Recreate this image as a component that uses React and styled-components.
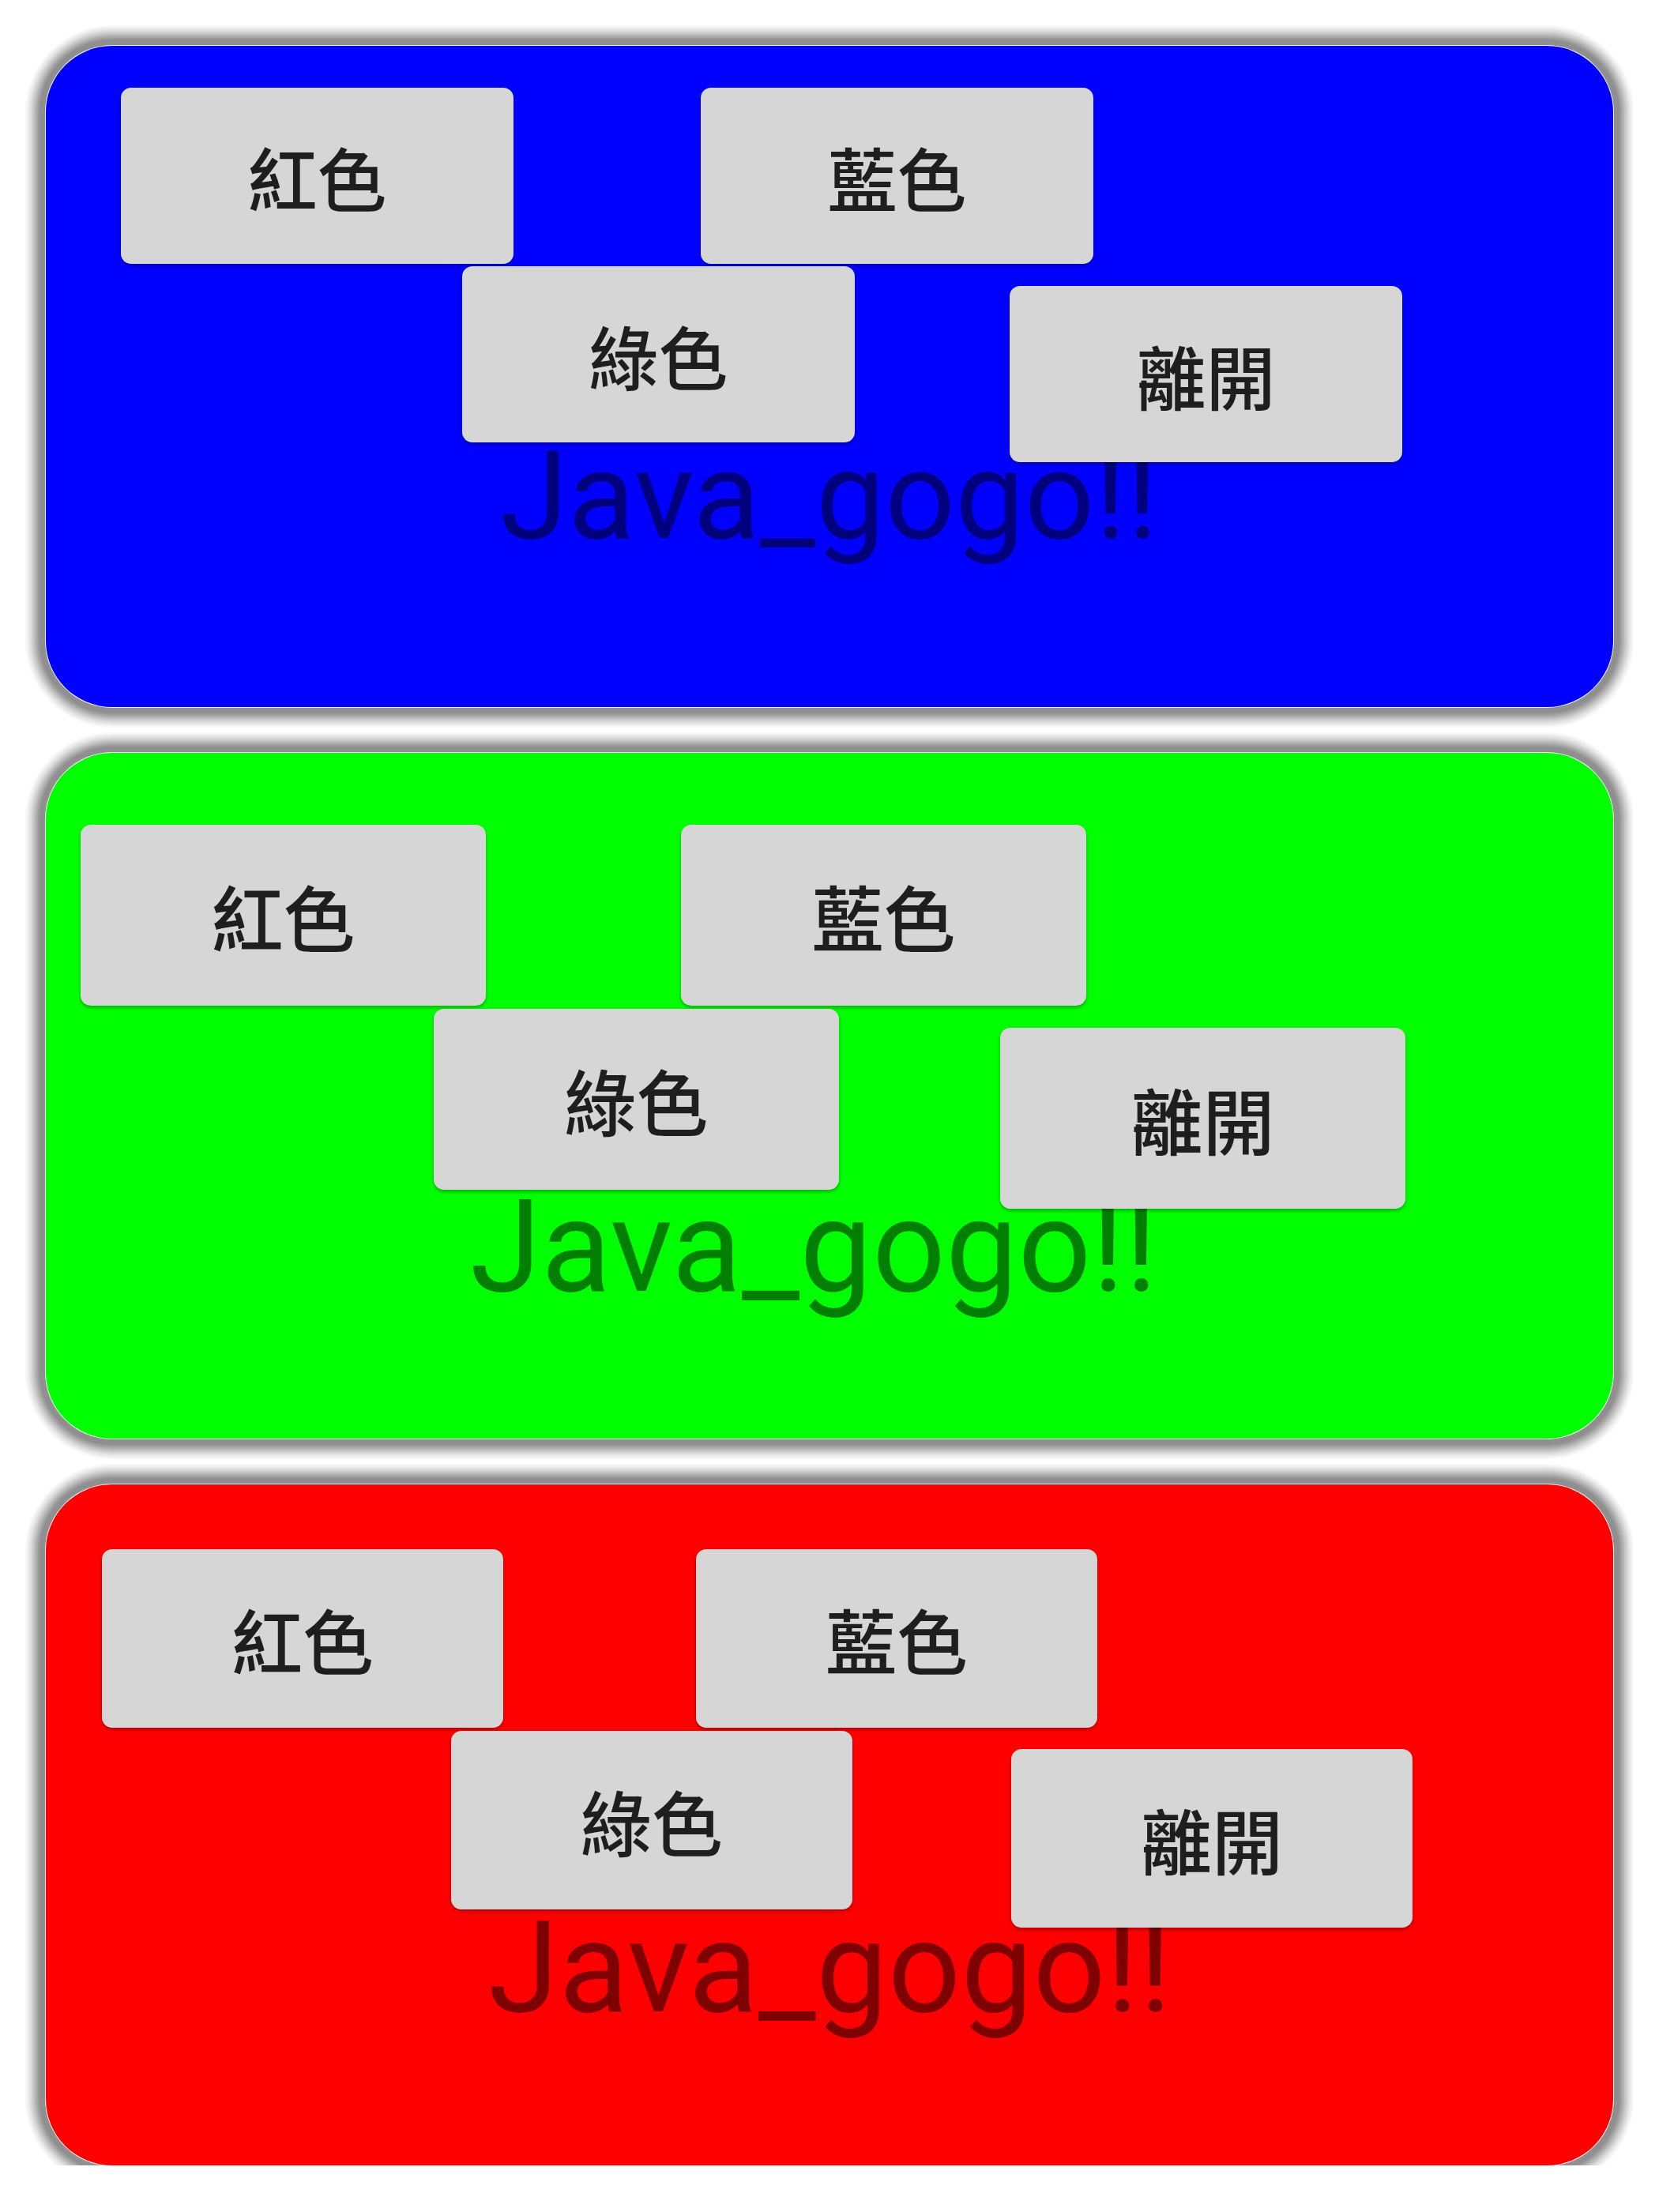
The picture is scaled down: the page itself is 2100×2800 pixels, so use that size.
import React from 'react'
import styled, { createGlobalStyle } from 'styled-components'

const GlobalStyle = createGlobalStyle`
    html, body {
        margin: 0;
        padding: 0;
        background: #ffffff;
    }
`

// each screen is the same layout, captured at a slightly different scale
const screens = [
    {
        bg: '#0000ff', height: 837, top: 53, left: 95,
        btnW: 497, btnH: 223, btnFont: 88,
        rowGap: 237, row2Left: 432, row2Top: 3, exitLeft: 196, exitTop: 25,
        textFont: 156, textLeft: 480, textTop: -35
    },
    {
        bg: '#00ff00', height: 868, top: 91, left: 44,
        btnW: 513, btnH: 229, btnFont: 91,
        rowGap: 247, row2Left: 447, row2Top: 4, exitLeft: 204, exitTop: 24,
        textFont: 163, textLeft: 493, textTop: -33
    },
    {
        bg: '#ff0000', height: 862, top: 82, left: 71,
        btnW: 508, btnH: 226, btnFont: 90,
        rowGap: 244, row2Left: 442, row2Top: 4, exitLeft: 201, exitTop: 23,
        textFont: 162, textLeft: 489, textTop: -30
    }
]

const Page = styled.div`
    display: flex;
    flex-direction: column;
    gap: 58px;
    width: 2100px;
    padding: 58px 58px 0 58px;
    box-sizing: border-box;
`
const Screen = styled.section`
    height: ${p => p.$height}px;
    padding: ${p => p.$top}px 0 0 ${p => p.$left}px;
    box-sizing: border-box;
    background: ${p => p.$bg};
    border-radius: 84px;
    overflow: hidden;
    box-shadow:
        0 0 0 1px #f4f4f4,
        0 0 0 8px #8f8f8f,
        0 0 0 10px #9a9a9a,
        0 0 0 12px #a7a7a7,
        0 0 0 14px #b5b5b5,
        0 0 0 16px #c3c3c3,
        0 0 0 18px #d0d0d0,
        0 0 0 20px #dcdcdc,
        0 0 0 22px #e7e7e7,
        0 0 0 24px #f0f0f0,
        0 0 0 26px #f8f8f8;
`
const ButtonRow = styled.div`
    display: flex;
    align-items: flex-start;
    gap: ${p => p.$gap || 0}px;
    margin: ${p => p.$top || 0}px 0 0 ${p => p.$left || 0}px;
`
const ActionButton = styled.button`
    position: relative;
    z-index: 1;
    flex: none;
    width: ${p => p.$w}px;
    height: ${p => p.$h}px;
    margin: ${p => p.$mt || 0}px 0 0 ${p => p.$ml || 0}px;
    padding: 0;
    border: 0;
    border-radius: 13px;
    background: #d6d6d6;
    box-shadow: 0 3px 4px rgba(0, 0, 0, 0.28);
    color: #1e1e1e;
    font-family: "Noto Sans CJK TC", "Noto Sans CJK SC", sans-serif;
    font-weight: 500;
    font-size: ${p => p.$font}px;
    line-height: 1;
`
const Banner = styled.div`
    margin: ${p => p.$top}px 0 0 ${p => p.$left}px;
    font-family: Roboto, "Liberation Sans", sans-serif;
    font-size: ${p => p.$font}px;
    line-height: 1;
    color: rgba(0, 0, 0, 0.5);
    white-space: nowrap;
`

const PhoneScreen = ({ s }) => {
    const size = { $w: s.btnW, $h: s.btnH, $font: s.btnFont }
    return (
        <Screen $bg={s.bg} $height={s.height} $top={s.top} $left={s.left}>
            <ButtonRow $gap={s.rowGap}>
                <ActionButton {...size}>紅色</ActionButton>
                <ActionButton {...size}>藍色</ActionButton>
            </ButtonRow>
            <ButtonRow $left={s.row2Left} $top={s.row2Top}>
                <ActionButton {...size}>綠色</ActionButton>
                <ActionButton {...size} $ml={s.exitLeft} $mt={s.exitTop}>離開</ActionButton>
            </ButtonRow>
            <Banner $font={s.textFont} $left={s.textLeft} $top={s.textTop}>Java_gogo!!</Banner>
        </Screen>
    )
}

export default function App() {
    return (
        <>
            <GlobalStyle />
            <Page>
                {screens.map((s, i) => <PhoneScreen key={i} s={s} />)}
            </Page>
        </>
    )
}
